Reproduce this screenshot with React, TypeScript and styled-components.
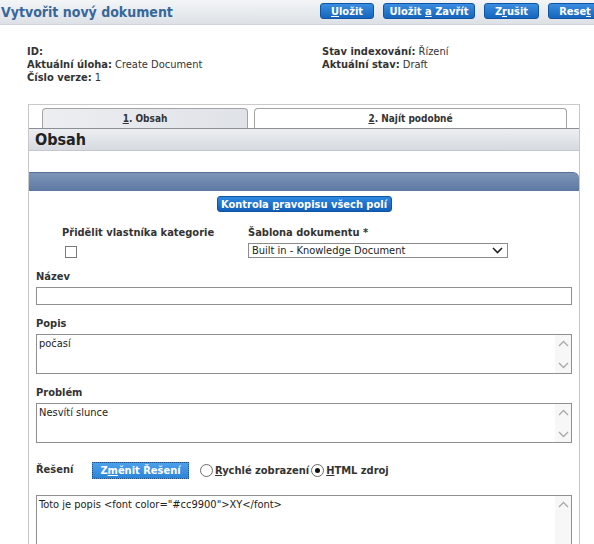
import styled, { createGlobalStyle } from 'styled-components';

const GlobalStyle = createGlobalStyle`
  html, body {
    margin: 0;
    padding: 0;
    background: #ffffff;
  }
  body {
    font-family: "DejaVu Sans Condensed", "DejaVu Sans", Tahoma, sans-serif;
    font-size: 11px;
    color: #333333;
  }
`;

const Page = styled.div`
  width: 594px;
  height: 544px;
  overflow: hidden;
`;

const Header = styled.div`
  height: 24px;
  display: flex;
  align-items: flex-start;
  justify-content: space-between;
  background: linear-gradient(#f3f5f7, #dde1e6);
  border-bottom: 1px solid #cfd4da;
  overflow: hidden;
`;

const Title = styled.h1`
  margin: 0;
  padding: 4px 0 0 1px;
  font-size: 14px;
  font-weight: bold;
  color: #37679a;
  white-space: nowrap;
`;

const Actions = styled.div`
  display: flex;
  gap: 9px;
  padding-top: 3px;
  margin-right: -8px;
`;

const BlueButton = styled.button<{ $w: number }>`
  width: ${p => p.$w}px;
  height: 16px;
  padding: 0;
  border: 1px solid #0f55a3;
  border-radius: 3px;
  background: linear-gradient(#3a8de0, #1765bd);
  color: #ffffff;
  font-family: inherit;
  font-size: 11px;
  font-weight: bold;
  white-space: nowrap;
  flex-shrink: 0;

  u { text-decoration: underline; }
`;

const Meta = styled.div`
  display: grid;
  grid-template-columns: 295px auto;
  padding: 20px 0 0 27px;
  line-height: 13px;
`;

const MetaCol = styled.div`
  display: flex;
  flex-direction: column;
`;

const MetaLine = styled.div`
  height: 13px;
  white-space: nowrap;
  b { color: #333; }
`;

const Panel = styled.div`
  margin: 20px 0 0 28px;
  width: 550px;
  border: 1px solid #c9c9c9;
  border-bottom: none;
  height: 460px;
`;

const Tabs = styled.div`
  display: flex;
  gap: 6px;
  padding: 3px 0 0 13px;
`;

const Tab = styled.div<{ $w: number; $active?: boolean }>`
  width: ${p => p.$w}px;
  height: 20px;
  box-sizing: border-box;
  border: 1px solid #a3a3a3;
  border-bottom: none;
  border-radius: 4px 4px 0 0;
  background: ${p => (p.$active ? 'linear-gradient(90deg, #eceef1, #dfe2e7)' : '#ffffff')};
  font-size: 10px;
  font-weight: bold;
  color: #333;
  text-align: center;
  line-height: 19px;
`;

const SectionBar = styled.div`
  height: 21px;
  border-top: 1px solid #8a8f96;
  border-bottom: 1px solid #c3c8ce;
  background: linear-gradient(#eceef1, #d6dae0);
  font-size: 16px;
  font-weight: bold;
  color: #222;
  padding-left: 6px;
  line-height: 21px;
`;

const BlueBand = styled.div`
  margin-top: 21px;
  height: 18px;
  background: linear-gradient(#7d95b8, #5d78a2);
  border-top: 1px solid #5a7097;
  border-radius: 0 6px 0 0;
`;

const Content = styled.div`
  padding: 5px 7px 0 7px;
`;

const CenterRow = styled.div`
  display: flex;
  justify-content: center;
`;

const SpellButton = styled.button`
  width: 175px;
  height: 16px;
  padding: 0;
  border: 1px solid #0f55a3;
  border-radius: 3px;
  background: linear-gradient(#2d88e0, #125fba);
  color: #fff;
  font-family: inherit;
  font-size: 11px;
  font-weight: bold;

  u { text-decoration: underline; }
`;

const OptionsGrid = styled.div`
  display: grid;
  grid-template-columns: 186px 1fr;
  row-gap: 3px;
  padding: 14px 0 0 26px;
`;

const Label = styled.div`
  font-weight: bold;
  color: #333;
  line-height: 14px;
  white-space: nowrap;
`;

const CheckBox = styled.span`
  display: block;
  width: 10px;
  height: 10px;
  margin: 3px 0 0 3px;
  border: 1px solid #7a7a7a;
  background: #fff;
`;

const SelectBox = styled.div`
  width: 260px;
  height: 15px;
  box-sizing: border-box;
  border: 1px solid #8c8c8c;
  display: flex;
  align-items: center;
  justify-content: space-between;
  padding: 0 4px 0 3px;
  font-size: 11px;
  color: #222;
`;

const Field = styled.div<{ $top: number }>`
  margin-top: ${p => p.$top}px;
  display: flex;
  flex-direction: column;
  gap: 3px;
`;

const TextInput = styled.div`
  height: 18px;
  box-sizing: border-box;
  border: 1px solid #8f8f8f;
  background: #fff;
`;

const TextArea = styled.div<{ $h: number }>`
  height: ${p => p.$h}px;
  box-sizing: border-box;
  border: 1px solid #8f8f8f;
  display: flex;
  background: #fff;
`;

const AreaText = styled.div`
  flex: 1;
  padding: 2px 2px;
  font-size: 11px;
  color: #222;
  line-height: 14px;
  white-space: nowrap;
`;

const ScrollTrack = styled.div`
  width: 16px;
  display: flex;
  flex-direction: column;
  justify-content: space-between;
  align-items: center;
  padding: 5px 0 4px;
  background: #f7f7f7;
`;

const SolutionRow = styled.div`
  margin-top: 18px;
  display: flex;
  align-items: center;
  height: 18px;
`;

const SolutionLabel = styled(Label)`
  width: 56px;
`;

const ChangeButton = styled.button`
  width: 97px;
  height: 17px;
  padding: 0;
  border: 1px dotted #1b4f86;
  background: linear-gradient(#4da0ea, #2d85d8);
  color: #fff;
  font-family: inherit;
  font-size: 11px;
  font-weight: bold;
  margin-right: 11px;

  u { text-decoration: underline; }
`;

const Radio = styled.span<{ $checked?: boolean }>`
  width: 11px;
  height: 11px;
  border-radius: 50%;
  border: 1px solid #6a6a6a;
  background: #fff;
  display: inline-flex;
  align-items: center;
  justify-content: center;
  margin-right: 2px;

  &::after {
    content: '';
    width: 5px;
    height: 5px;
    border-radius: 50%;
    background: ${p => (p.$checked ? '#111' : 'transparent')};
  }
`;

const RadioText = styled.span`
  font-weight: bold;
  color: #333;
  margin-right: 2px;
  white-space: nowrap;
`;

const Chevron = ({ up }: { up?: boolean }) => (
  <svg width="11" height="7" viewBox="0 0 11 7">
    <path
      d={up ? 'M1 6 L5.5 1.5 L10 6' : 'M1 1 L5.5 5.5 L10 1'}
      fill="none"
      stroke="#a9a9a9"
      strokeWidth="1.3"
    />
  </svg>
);

const SelectArrow = () => (
  <svg width="11" height="7" viewBox="0 0 11 7">
    <path d="M1 1 L5.5 5.5 L10 1" fill="none" stroke="#222" strokeWidth="1.6" />
  </svg>
);

const Scroll = ({ bottom = true }: { bottom?: boolean }) => (
  <ScrollTrack>
    <Chevron up />
    {bottom && <Chevron />}
  </ScrollTrack>
);

export default function App() {
  return (
    <Page>
      <GlobalStyle />
      <Header>
        <Title>Vytvořit nový dokument</Title>
        <Actions>
          <BlueButton $w={54}><u>U</u>ložit</BlueButton>
          <BlueButton $w={92}>Uložit <u>a</u> Zavřít</BlueButton>
          <BlueButton $w={55}>Z<u>r</u>ušit</BlueButton>
          <BlueButton $w={54}>Rese<u>t</u></BlueButton>
        </Actions>
      </Header>

      <Meta>
        <MetaCol>
          <MetaLine><b>ID:</b></MetaLine>
          <MetaLine><b>Aktuální úloha:</b> Create Document</MetaLine>
          <MetaLine><b>Číslo verze:</b> 1</MetaLine>
        </MetaCol>
        <MetaCol>
          <MetaLine><b>Stav indexování:</b> Řízení</MetaLine>
          <MetaLine><b>Aktuální stav:</b> Draft</MetaLine>
        </MetaCol>
      </Meta>

      <Panel>
        <Tabs>
          <Tab $w={206} $active><u>1</u>. Obsah</Tab>
          <Tab $w={313}><u>2</u>. Najít podobné</Tab>
        </Tabs>
        <SectionBar>Obsah</SectionBar>
        <BlueBand />

        <Content>
          <CenterRow>
            <SpellButton>Kontrola <u>p</u>ravopisu všech polí</SpellButton>
          </CenterRow>

          <OptionsGrid>
            <Label>Přidělit vlastníka kategorie</Label>
            <Label>Šablona dokumentu *</Label>
            <div><CheckBox /></div>
            <SelectBox>
              <span>Built in - Knowledge Document</span>
              <SelectArrow />
            </SelectBox>
          </OptionsGrid>

          <Field $top={12}>
            <Label>Název</Label>
            <TextInput />
          </Field>

          <Field $top={12}>
            <Label>Popis</Label>
            <TextArea $h={40}>
              <AreaText>počasí</AreaText>
              <Scroll />
            </TextArea>
          </Field>

          <Field $top={12}>
            <Label>Problém</Label>
            <TextArea $h={40}>
              <AreaText>Nesvítí slunce</AreaText>
              <Scroll />
            </TextArea>
          </Field>

          <SolutionRow>
            <SolutionLabel>Řešení</SolutionLabel>
            <ChangeButton>Z<u>m</u>ěnit Řešení</ChangeButton>
            <Radio />
            <RadioText><u>R</u>ychlé zobrazení</RadioText>
            <Radio $checked />
            <RadioText><u>H</u>TML zdroj</RadioText>
          </SolutionRow>

          <Field $top={16}>
            <TextArea $h={70}>
              <AreaText>Toto je popis &lt;font color="#cc9900"&gt;XY&lt;/font&gt;</AreaText>
              <Scroll bottom={false} />
            </TextArea>
          </Field>
        </Content>
      </Panel>
    </Page>
  );
}
